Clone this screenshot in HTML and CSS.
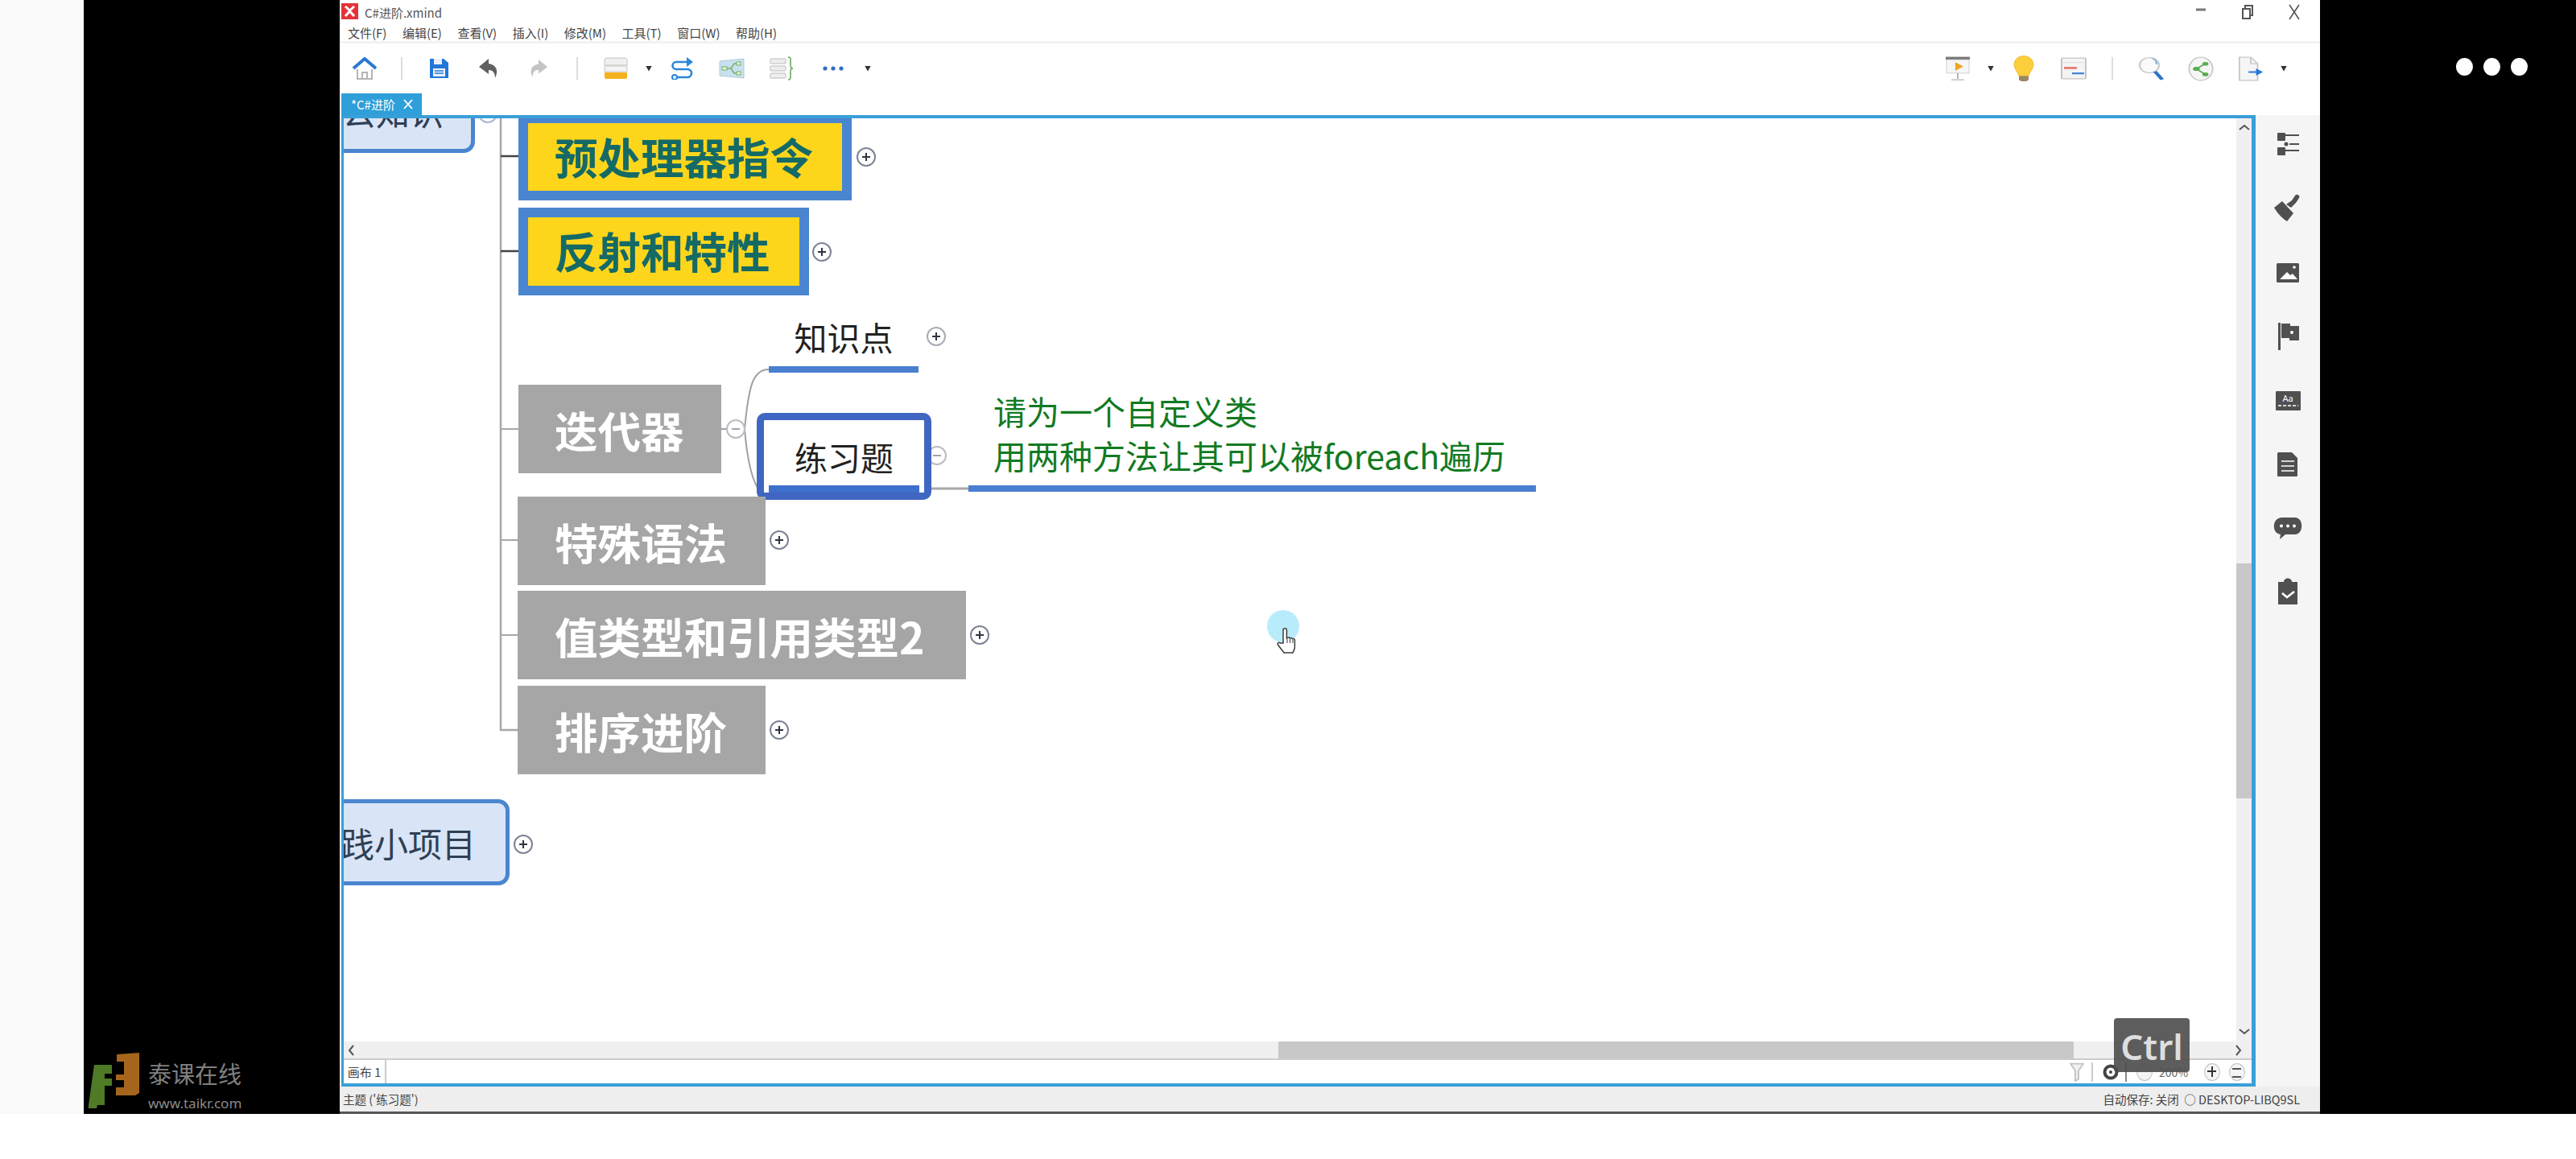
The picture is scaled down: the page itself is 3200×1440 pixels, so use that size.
FILE: index.html
```html
<!DOCTYPE html>
<html lang="zh-CN">
<head>
    <meta charset="UTF-8">
    <title>C#进阶.xmind</title>
    <link rel="stylesheet" href="styles.css">
</head>
<body>

<div class="stage">
    <div class="edge"></div>

    <div class="side-black side-left">
        <div class="logo">
            <svg class="logo-mark" width="64" height="70" viewBox="0 0 64 70">
                <path d="M8 15h22v11h-9v6h9v9h-9v24h-9l-1 4H1v-4z" fill="#4f7a26"/>
                <path d="M36 2l28-2v50l-5 3H35V43h10v-9H35v-7h10V11H36z" fill="#a5651c"/>
            </svg>
            <div class="logo-text">
                <div class="logo-name">泰课在线</div>
                <div class="logo-url">www.taikr.com</div>
            </div>
        </div>
    </div>

    <div class="window">
        <div class="titlebar">
            <svg class="app-icon" width="21" height="20" viewBox="0 0 21 20">
                <rect width="21" height="20" fill="#e2343a"/>
                <path d="M5 4l5.500 5L16 4M5 16l5.500-6L16 16" fill="none" stroke="#fff" stroke-width="3"/>
            </svg>
            <span class="title-text">C#进阶.xmind</span>
            <div class="win-buttons">
                <span class="win-btn"><svg width="14" height="14" viewBox="0 0 14 14"><path d="M1 7h12" stroke="#777" stroke-width="3"/></svg></span>
                <span class="win-btn"><svg width="16" height="20" viewBox="0 0 16 20"><path d="M5 5V2h9v12h-3M2 6h9v12H2z" fill="none" stroke="#555" stroke-width="2"/></svg></span>
                <span class="win-btn"><svg width="16" height="20" viewBox="0 0 16 20"><path d="M2 1l12 18M14 1L2 19" stroke="#555" stroke-width="1.600"/></svg></span>
            </div>
        </div>

        <div class="menubar">
            <span>文件(F)</span>
            <span>编辑(E)</span>
            <span>查看(V)</span>
            <span>插入(I)</span>
            <span>修改(M)</span>
            <span>工具(T)</span>
            <span>窗口(W)</span>
            <span>帮助(H)</span>
        </div>

        <div class="toolbar">
            <div class="tool-group">
                <span class="tool">
                    <svg width="32" height="28" viewBox="0 0 32 28"><path d="M2 14L16 2l14 12" fill="none" stroke="#2a78d2" stroke-width="4"/><path d="M7 15v12h18V15M13 27v-8h6v8" fill="none" stroke="#b5b5b5" stroke-width="2"/></svg>
                </span>
                <span class="tool-sep tool-sep-first"></span>
                <span class="tool">
                    <svg width="26" height="26" viewBox="0 0 26 26"><path d="M2 1h17l6 5v19H2z" fill="#2277d6"/><path d="M7 1h10v7H7z" fill="#e8f1fb"/><path d="M6 13h15v10H6z" fill="#e8f1fb"/><path d="M8 16h11M8 19h11" stroke="#2277d6" stroke-width="1.500"/></svg>
                </span>
                <span class="tool">
                    <svg width="26" height="26" viewBox="0 0 26 26"><path d="M13 1L1 11l12 9v-5c5 0 8 3 8 10 4-8 3-16-8-18z" fill="#606060"/></svg>
                </span>
                <span class="tool">
                    <svg width="24" height="24" viewBox="0 0 26 26"><path d="M13 1l12 10-12 9v-5c-5 0-8 3-8 10-4-8-3-16 8-18z" fill="#c4c4c4"/></svg>
                </span>
                <span class="tool-sep"></span>
                <span class="tool">
                    <svg width="30" height="28" viewBox="0 0 30 28"><path d="M1 4a3 3 0 0 1 3-3h23a3 3 0 0 1 2 3v6H1z" fill="#f0f0f0" stroke="#c4c4c4"/><path d="M1 11h28v7H1z" fill="#f4f4f4" stroke="#c4c4c4"/><path d="M1 19h28v6a2 2 0 0 1-2 2H3a2 2 0 0 1-2-2z" fill="#f4b21e"/></svg>
                </span>
                <span class="caret"></span>
                <span class="tool">
                    <svg width="30" height="28" viewBox="0 0 30 28"><path d="M25 6H8a4.500 4.500 0 0 0 0 9h14a5 5 0 0 1 0 10H8" fill="none" stroke="#2a86d8" stroke-width="2.600"/><path d="M21 0l8 6-8 6z" fill="#2a86d8"/><circle cx="6" cy="25" r="3" fill="#fff" stroke="#2a86d8" stroke-width="2"/></svg>
                </span>
                <span class="tool">
                    <svg width="32" height="26" viewBox="0 0 32 26"><path d="M1 4l30-3v24L1 22z" fill="#c9e0ee" stroke="#b2c9d8"/><path d="M9 13h6l4-6h5M15 13l4 6h5" fill="none" stroke="#6fb165" stroke-width="1.400"/><rect x="4" y="11" width="6" height="4" fill="#e6f4df" stroke="#6fb165"/><rect x="22" y="5" width="5" height="4" fill="#e6f4df" stroke="#6fb165"/><rect x="22" y="17" width="5" height="4" fill="#e6f4df" stroke="#6fb165"/></svg>
                </span>
                <span class="tool">
                    <svg width="30" height="30" viewBox="0 0 30 30"><rect x="1" y="3" width="19" height="6" rx="1" fill="#eee" stroke="#bbb"/><rect x="1" y="12" width="19" height="6" rx="1" fill="#eee" stroke="#bbb"/><rect x="1" y="21" width="19" height="6" rx="1" fill="#eee" stroke="#bbb"/><path d="M23 1c3 0 3 1 3 4v6c0 3 1 4 3 4-2 0-3 1-3 4v6c0 3 0 4-3 4" fill="none" stroke="#68a860" stroke-width="1.600"/></svg>
                </span>
                <span class="tool tool-more">
                    <svg width="26" height="6" viewBox="0 0 26 6"><circle cx="3" cy="3" r="2.600" fill="#2f6fc4"/><circle cx="13" cy="3" r="2.600" fill="#2f6fc4"/><circle cx="23" cy="3" r="2.600" fill="#2f6fc4"/></svg>
                </span>
                <span class="caret"></span>
            </div>

            <div class="tool-group">
                <span class="tool">
                    <svg width="32" height="31" viewBox="0 0 32 52" preserveAspectRatio="none"><path d="M1 1h30v6H1z" fill="#777"/><path d="M2 7h28v28H2z" fill="#f6f6f6" stroke="#c8c8c8"/><path d="M13 12l10 9-10 9z" fill="#f0a32a"/><path d="M16 35v12M8 49h16" stroke="#b5b5b5" stroke-width="2"/></svg>
                </span>
                <span class="caret"></span>
                <span class="tool">
                    <svg width="26" height="32" viewBox="0 0 26 54" preserveAspectRatio="none"><path d="M13 1c7 0 12 8 12 18 0 8-4 14-6 24H7C5 33 1 27 1 19 1 9 6 1 13 1z" fill="#fbce3b" stroke="#eeb425"/><path d="M7 43h12v8l-3 3h-6l-3-3z" fill="#9a8763"/></svg>
                </span>
                <span class="tool">
                    <svg width="32" height="28" viewBox="0 0 32 50" preserveAspectRatio="none"><rect x="1" y="2" width="30" height="46" rx="2" fill="#f4f4f4" stroke="#c4c4c4" stroke-width="2"/><path d="M3 12h26" stroke="#ddd" stroke-width="2"/><path d="M4 24h16" stroke="#e57d70" stroke-width="5"/><path d="M14 36h15" stroke="#3f86d6" stroke-width="4"/></svg>
                </span>
                <span class="tool-sep"></span>
                <span class="tool">
                    <svg width="32" height="30" viewBox="0 0 32 54" preserveAspectRatio="none"><ellipse cx="14" cy="20" rx="12" ry="17" fill="#fafafa" stroke="#c8ccd2" stroke-width="2.400"/><path d="M17 4c4 2 6 8 6 14" fill="none" stroke="#7cb0df" stroke-width="2"/><path d="M21 34l9 18" stroke="#2c75c9" stroke-width="5"/></svg>
                </span>
                <span class="tool">
                    <svg width="32" height="31" viewBox="0 0 34 54" preserveAspectRatio="none"><ellipse cx="17" cy="27" rx="15.500" ry="25" fill="#f6f6f6" stroke="#c9c9c9" stroke-width="2"/><path d="M23 16L11 27l12 12" fill="none" stroke="#57ad4f" stroke-width="2.500"/><circle cx="23" cy="16" r="4" fill="#57ad4f"/><circle cx="11" cy="27" r="4.500" fill="#57ad4f"/><circle cx="23" cy="39" r="4" fill="#57ad4f"/></svg>
                </span>
                <span class="tool">
                    <svg width="32" height="31" viewBox="0 0 34 54" preserveAspectRatio="none"><path d="M2 2h15l9 14v36H2z" fill="#f6f6f6" stroke="#c8c8c8" stroke-width="2"/><path d="M17 2v14h9" fill="none" stroke="#c8c8c8" stroke-width="2"/><path d="M14 34h14" stroke="#2a78d2" stroke-width="3.500"/><path d="M24 26l9 8-9 8z" fill="#2a78d2"/></svg>
                </span>
                <span class="caret"></span>
            </div>
        </div>

        <div class="tabbar">
            <div class="tab">
                <span>*C#进阶</span>
                <svg width="12" height="13" viewBox="0 0 12 13"><path d="M1 1l10 11M11 1L1 12" stroke="#fff" stroke-width="1.800"/></svg>
            </div>
        </div>

        <div class="main">
            <div class="frame">
                <div class="canvas-row">
                    <div class="canvas">
                        <svg class="lines" width="2351" height="1147" viewBox="427 147 2351 1147">
                            <path d="M622 143V907H644" fill="none" stroke="#a8a8a8" stroke-width="2.500"/>
                            <path d="M622 194H644M622 312H644" stroke="#444" stroke-width="2.500"/>
                            <path d="M622 533H644M622 671H644M622 789H644" stroke="#a8a8a8" stroke-width="2"/>
                            <path d="M896 533H925M925 533C930 480 935 459 955 459M925 533C928 570 935 600 945 612" fill="none" stroke="#a0a0a0" stroke-width="2"/>
                            <path d="M1157 607H1203" stroke="#a8a8a8" stroke-width="3"/>
                        </svg>

                        <div class="topic topic-top"><span>公知识</span></div>
                        <span class="toggle t-top"></span>

                        <div class="node node-gold n-pre">预处理器指令</div>
                        <span class="toggle toggle-plus t-pre"></span>
                        <div class="node node-gold n-reflect">反射和特性</div>
                        <span class="toggle toggle-plus t-reflect"></span>

                        <div class="node node-gray n-iter">迭代器</div>
                        <span class="toggle toggle-faint t-iter"></span>

                        <div class="leaf leaf-know">知识点</div>
                        <span class="toggle toggle-plus toggle-soft t-know"></span>

                        <span class="toggle toggle-faint t-practice"></span>
                        <div class="leaf-selected">练习题</div>

                        <div class="answer">
                            <div>请为一个自定义类</div>
                            <div>用两种方法让其可以被foreach遍历</div>
                        </div>

                        <div class="node node-gray n-special">特殊语法</div>
                        <span class="toggle toggle-plus t-special"></span>
                        <div class="node node-gray n-value">值类型和引用类型2</div>
                        <span class="toggle toggle-plus t-value"></span>
                        <div class="node node-gray n-sort">排序进阶</div>
                        <span class="toggle toggle-plus t-sort"></span>

                        <div class="topic topic-project"><span>实践小项目</span></div>
                        <span class="toggle toggle-plus t-project"></span>

                        <div class="click-halo"></div>
                        <svg class="hand" width="26" height="34" viewBox="0 0 26 34">
                            <path d="M8 20V4a2.200 2.200 0 0 1 4.400 0v10l1-.5a2 2 0 0 1 3 .5 2 2 0 0 1 3 .8 2 2 0 0 1 3 1.500V25c0 3-1.500 5-2.500 7H9c-2-3-5-6-7.500-10-1-2 1-3.500 3-2z" fill="#fff" stroke="#3c3c3c" stroke-width="1.500"/>
                            <path d="M13 15v5M16.500 15v5M20 16v4" stroke="#3c3c3c"/>
                        </svg>
                    </div>
                    <div class="vscroll">
                        <svg class="arrow-up" width="14" height="8" viewBox="0 0 14 8"><path d="M1 7l6-5 6 5" fill="none" stroke="#555" stroke-width="2"/></svg>
                        <div class="vthumb"></div>
                        <svg class="arrow-down" width="14" height="8" viewBox="0 0 14 8"><path d="M1 1l6 5 6-5" fill="none" stroke="#555" stroke-width="2"/></svg>
                    </div>
                </div>

                <div class="hscroll">
                    <svg width="8" height="14" viewBox="0 0 8 14"><path d="M7 1L2 7l5 6" fill="none" stroke="#555" stroke-width="2"/></svg>
                    <div class="hthumb"></div>
                    <svg width="8" height="14" viewBox="0 0 8 14"><path d="M1 1l5 6-5 6" fill="none" stroke="#555" stroke-width="2"/></svg>
                </div>

                <div class="sheetbar">
                    <div class="sheet-tab">画布 1</div>
                    <div class="sheet-tools">
                        <svg class="funnel" width="18" height="24" viewBox="0 0 18 30" preserveAspectRatio="none"><path d="M1 2h16l-6 11v13l-4 3V13z" fill="#f0f0f0" stroke="#c4c4c4" stroke-width="2"/></svg>
                        <span class="sheet-sep"></span>
                        <svg class="eye" width="20" height="20" viewBox="0 0 20 20"><circle cx="10" cy="10" r="7.500" fill="none" stroke="#444" stroke-width="4"/><circle cx="10" cy="10" r="2" fill="#444"/></svg>
                        <span class="sheet-sep sheet-sep-dark"></span>
                        <span class="zoom-btn zoom-minus"></span>
                        <span class="zoom-value">200%</span>
                        <span class="zoom-btn zoom-plus"></span>
                        <span class="zoom-btn zoom-menu"></span>
                    </div>
                </div>
            </div>

            <div class="sidepanel">
                <svg width="40" height="40" viewBox="0 0 40 40"><rect x="7" y="6" width="10" height="10" rx="1" fill="#505050"/><rect x="7" y="24" width="10" height="10" rx="1" fill="#505050"/><path d="M17 9h17M22 20h12M17 28h17" stroke="#505050" stroke-width="2"/><circle cx="18" cy="20" r="2.500" fill="#505050"/></svg>
                <svg width="40" height="40" viewBox="0 0 40 40"><path d="M3 20l10-8 14 15-8 10c-5-3-12-10-16-17z" fill="#505050"/><path d="M18 16l7-5 4-6c2-3 7 0 5 3l-4 6-6 6z" fill="#505050"/></svg>
                <svg width="40" height="40" viewBox="0 0 40 40"><rect x="6" y="9" width="28" height="24" rx="1.500" fill="#505050"/><path d="M10 29l9-9 4 4 3-2 6 7z" fill="#fff"/><circle cx="28" cy="14" r="1.800" fill="#fff"/></svg>
                <svg width="40" height="40" viewBox="0 0 40 40"><path d="M8 4h3v34H8z" fill="#505050"/><path d="M12 5h11v3h11v18H22v-3H12z" fill="#505050"/><circle cx="25" cy="16" r="2" fill="#fff"/></svg>
                <svg width="40" height="40" viewBox="0 0 40 40"><rect x="5" y="9" width="31" height="24" rx="1" fill="#505050"/><text class="aa-text" x="20" y="22" text-anchor="middle">Aa</text><path d="M8 27h25" stroke="#fff" stroke-width="1.500" stroke-dasharray="4 2"/></svg>
                <svg width="40" height="40" viewBox="0 0 40 40"><path d="M8 6h17l7 7v22a1 1 0 0 1-1 1H8a1 1 0 0 1-1-1V7z" fill="#505050"/><path d="M12 17h16M12 23h16M12 29h16" stroke="#fff" stroke-width="1.600"/></svg>
                <svg width="40" height="40" viewBox="0 0 40 40"><path d="M12 8h17c11 0 11 21 0 21H17l-7 6 1-6c-11-1-11-20 1-21z" fill="#505050"/><circle cx="12" cy="18.500" r="2" fill="#fff"/><circle cx="20" cy="18.500" r="2" fill="#fff"/><circle cx="28" cy="18.500" r="2" fill="#fff"/></svg>
                <svg width="40" height="40" viewBox="0 0 40 40"><path d="M8 8h7c0-6 10-6 10 0h7v28H8z" fill="#505050"/><path d="M13 22l6 5 9-7" fill="none" stroke="#fff" stroke-width="2.600"/></svg>
            </div>
        </div>

        <div class="statusbar">
            <span>主题 ('练习题')</span>
            <span class="status-right">自动保存: 关闭 &nbsp;○ DESKTOP-LIBQ9SL</span>
        </div>

        <div class="key-badge">Ctrl</div>
    </div>

    <div class="side-black side-right">
        <div class="dots">
            <span></span>
            <span></span>
            <span></span>
        </div>
    </div>
</div>

</body>
</html>
```

FILE: styles.css
```css
* {
    box-sizing: border-box;
}
body {
    margin: 0;
    height: 1440px;
    overflow: hidden;
    background-color: #fff;
    font-family: "Noto Sans CJK SC", "Noto Sans", sans-serif;
    color: #333;
}
.stage {
    display: flex;
    height: 1384px;
}
.edge {
    width: 104px;
    background-color: #fafafa;
}
.side-black {
    width: 318px;
    background-color: #000;
}

/* logo bottom left */
.side-left {
    display: flex;
    align-items: flex-end;
    padding-left: 5px;
}
.logo {
    display: flex;
    align-items: flex-end;
    gap: 11px;
}
.logo-mark {
    margin-bottom: 6px;
}
.logo-name {
    font-size: 29px;
    line-height: 32px;
    color: #808080;
}
.logo-url {
    margin-top: 9px;
    font-family: "Noto Sans", sans-serif;
    font-size: 17px;
    line-height: 26px;
    color: #8a8a8a;
}

.side-right {
    padding: 72px 0 0 169px;
}
.dots {
    display: flex;
    gap: 13px;
}
.dots span {
    width: 21px;
    height: 22px;
    border-radius: 50%;
    background-color: #fff;
}

/* app window */
.window {
    position: relative;
    display: flex;
    flex-direction: column;
    width: 2460px;
    background-color: #fff;
}
.titlebar {
    display: flex;
    align-items: center;
    height: 30px;
    padding: 0 3px 0 2px;
}
.app-icon {
    margin-top: -2px;
}
.title-text {
    margin-left: 8px;
    font-size: 15px;
    color: #555;
}
.win-buttons {
    display: flex;
    margin-left: auto;
}
.win-btn {
    display: flex;
    justify-content: center;
    width: 58px;
}
.menubar {
    display: flex;
    align-items: center;
    gap: 19.500px;
    height: 24px;
    padding-left: 10px;
    border-bottom: 3px solid #f2f2f2;
    font-size: 15px;
    color: #444;
}

.toolbar {
    display: flex;
    justify-content: space-between;
    height: 62px;
    padding-right: 35px;
}
.tool-group {
    display: flex;
    align-items: center;
}
.tool {
    display: flex;
    justify-content: center;
    align-items: center;
    width: 62px;
}
.tool-more {
    width: 66px;
}
.tool-sep {
    width: 34px;
    height: 28px;
}
.tool-sep-first {
    width: 30px;
}
.tool-sep::after {
    content: "";
    display: block;
    width: 2px;
    height: 28px;
    margin: 0 auto;
    background-color: #ddd;
}
.caret {
    width: 20px;
    height: 7px;
    background-color: #333;
    clip-path: polygon(30% 0, 70% 0, 50% 100%);
}

.tabbar {
    height: 27px;
    padding-left: 2px;
}
.tab {
    display: flex;
    align-items: center;
    justify-content: space-between;
    width: 100px;
    height: 27px;
    padding: 0 11px 0 12px;
    background-color: #2f9fd9;
    font-size: 15px;
    color: #fff;
}

.main {
    flex: 1;
    display: flex;
    min-height: 0;
    padding-left: 2px;
}
.frame {
    display: flex;
    flex-direction: column;
    width: 2378px;
    border: solid #3a9fd8;
    border-width: 4px 5px 4px 3px;
}
.canvas-row {
    flex: 1;
    display: flex;
    min-height: 0;
}
.canvas {
    position: relative;
    flex: 1;
    overflow: hidden;
    background-color: #fff;
}
.lines {
    position: absolute;
    left: 0;
    top: 0;
}

/* mind map nodes, placed on the canvas */
.node {
    position: absolute;
    display: flex;
    align-items: center;
    padding-left: 45px;
    font-size: 53.500px;
    font-weight: 700;
    white-space: nowrap;
}
.node-gold {
    padding: 0 0 4px 33px;
    border: 12px solid #4a86d0;
    background-color: #fdd61c;
    color: #156a66;
}
.node-gray {
    background-color: #a6a6a6;
    color: #fff;
}
.n-pre {
    left: 217px;
    top: -6px;
    width: 414px;
    height: 108px;
}
.n-reflect {
    left: 217px;
    top: 111px;
    width: 361px;
    height: 109px;
}
.n-iter {
    left: 217px;
    top: 331px;
    width: 252px;
    height: 110px;
}
.n-special {
    left: 216px;
    top: 470px;
    width: 308px;
    height: 110px;
    padding-left: 46px;
}
.n-value {
    left: 216px;
    top: 587px;
    width: 557px;
    height: 110px;
    padding-left: 46px;
}
.n-sort {
    left: 216px;
    top: 705px;
    width: 308px;
    height: 110px;
    padding-left: 46px;
}

.topic {
    position: absolute;
    display: flex;
    align-items: center;
    justify-content: flex-end;
    left: -20px;
    border: 5px solid #4a86d0;
    border-radius: 14px;
    background-color: #d9e5f6;
    font-size: 42px;
    color: #2f3f55;
    white-space: nowrap;
}
.topic-top {
    top: -63px;
    width: 183px;
    height: 106px;
    padding-right: 34px;
}
.topic-project {
    top: 846px;
    width: 226px;
    height: 107px;
    padding-right: 37px;
}

.leaf {
    position: absolute;
    display: flex;
    align-items: center;
    justify-content: center;
    padding-bottom: 3px;
    font-size: 41px;
    color: #222;
}
.leaf-know {
    left: 528px;
    top: 236px;
    width: 186px;
    height: 80px;
    border-bottom: 8px solid #4a7fd0;
}
.leaf-selected {
    position: absolute;
    display: flex;
    align-items: center;
    justify-content: center;
    left: 513px;
    top: 366px;
    width: 217px;
    height: 108px;
    border: 9px solid #3f66c0;
    border-radius: 10px;
    background-color: #fff;
    font-size: 41px;
    color: #222;
}
.leaf-selected::after {
    content: "";
    position: absolute;
    left: 6px;
    right: 6px;
    bottom: 0;
    height: 9px;
    background-color: #3f6fcc;
}
.answer {
    position: absolute;
    left: 776px;
    top: 336px;
    width: 705px;
    padding: 0 0 10px 31px;
    border-bottom: 8px solid #4a7fd0;
    font-size: 41px;
    line-height: 55px;
    color: #127a22;
    white-space: nowrap;
}

/* fold buttons beside the nodes */
.toggle {
    position: absolute;
    width: 24px;
    height: 24px;
    border: 2px solid #7c8494;
    border-radius: 50%;
    background-color: #fff;
}
.toggle::before {
    content: "";
    position: absolute;
    left: 5px;
    top: 9px;
    width: 10px;
    height: 2px;
    background-color: #2f3540;
}
.toggle-plus::after {
    content: "";
    position: absolute;
    left: 9px;
    top: 5px;
    width: 2px;
    height: 10px;
    background-color: #2f3540;
}
.toggle-faint {
    border-color: #b8bcc4;
}
.toggle-faint::before {
    background-color: #a0a4ac;
}
.toggle-soft {
    border-color: #a8acb4;
}
.t-top {
    left: 167px;
    top: -18px;
    border-color: #a8b8d0;
}
.t-pre {
    left: 637px;
    top: 36px;
}
.t-reflect {
    left: 582px;
    top: 154px;
}
.t-iter {
    left: 475px;
    top: 374px;
}
.t-know {
    left: 724px;
    top: 259px;
}
.t-practice {
    left: 725px;
    top: 407px;
}
.t-special {
    left: 529px;
    top: 512px;
}
.t-value {
    left: 778px;
    top: 630px;
}
.t-sort {
    left: 529px;
    top: 748px;
}
.t-project {
    left: 211px;
    top: 890px;
}

.click-halo {
    position: absolute;
    left: 1147px;
    top: 611px;
    width: 40px;
    height: 40px;
    border-radius: 50%;
    background-color: #b9ecfa;
}
.hand {
    position: absolute;
    left: 1159px;
    top: 632px;
}

/* scrollbars */
.vscroll {
    position: relative;
    width: 19px;
    background-color: #f0f0f0;
}
.arrow-up {
    position: absolute;
    left: 3px;
    top: 7px;
}
.arrow-down {
    position: absolute;
    left: 3px;
    bottom: 8px;
}
.vthumb {
    position: absolute;
    left: 0;
    right: 0;
    top: 553px;
    height: 292px;
    background-color: #c8c8c8;
}
.hscroll {
    position: relative;
    display: flex;
    align-items: center;
    justify-content: space-between;
    height: 21px;
    padding: 0 12px 0 5px;
    background-color: #f0f0f0;
}
.hthumb {
    position: absolute;
    left: 1161px;
    width: 988px;
    top: 0;
    bottom: 0;
    background-color: #c8c8c8;
}
.sheetbar {
    display: flex;
    justify-content: space-between;
    height: 31px;
    border-top: 2px solid #ccc;
}
.sheet-tab {
    display: flex;
    align-items: center;
    justify-content: center;
    width: 53px;
    border-right: 2px solid #ccc;
    font-size: 15px;
    color: #444;
}
.sheet-tools {
    display: flex;
    align-items: center;
}
.sheet-sep {
    width: 2px;
    height: 24px;
    margin: 0 12px 0 9px;
    background-color: #ccc;
}
.sheet-sep-dark {
    margin: 0 12px 0 8px;
    background-color: #888;
}
.zoom-value {
    width: 52px;
    margin: 0 4px 0 8px;
    font-size: 14px;
    color: #666;
}
.zoom-btn {
    position: relative;
    width: 20px;
    height: 22px;
    margin-right: 11px;
    border: 1.500px solid #c0c0c0;
    border-radius: 50%;
    background-color: #f4f4f4;
}
.zoom-minus {
    margin-right: 0;
}
.zoom-plus::before,
.zoom-plus::after,
.zoom-menu::before {
    content: "";
    position: absolute;
    background-color: #333;
}
.zoom-plus::before {
    left: 3px;
    top: 8px;
    width: 11px;
    height: 2px;
}
.zoom-plus::after {
    left: 7.500px;
    top: 3px;
    width: 2px;
    height: 13px;
}
.zoom-menu {
    margin-right: 8px;
}
.zoom-menu::before {
    left: 3px;
    top: 5px;
    width: 11px;
    height: 8px;
    background-color: transparent;
    border-top: 2px solid #555;
    border-bottom: 2px solid #555;
}

.sidepanel {
    flex: 1;
    display: flex;
    flex-direction: column;
    align-items: center;
    gap: 39.400px;
    padding-top: 16px;
    background-color: #f5f5f5;
}
.aa-text {
    font-family: "Noto Sans", sans-serif;
    font-size: 11px;
    fill: #fff;
}

.statusbar {
    display: flex;
    align-items: center;
    justify-content: space-between;
    height: 34px;
    padding: 0 25px 0 4px;
    border-bottom: 3px solid #555;
    background-color: #eee;
    font-size: 14.500px;
    color: #444;
}

.key-badge {
    position: absolute;
    left: 2204px;
    top: 1265px;
    width: 94px;
    height: 67px;
    border-radius: 4px;
    background-color: rgba(75, 75, 75, 0.9);
    font-family: "Noto Sans", sans-serif;
    font-size: 44px;
    font-weight: 600;
    line-height: 70px;
    text-align: center;
    color: #dedede;
}
```
